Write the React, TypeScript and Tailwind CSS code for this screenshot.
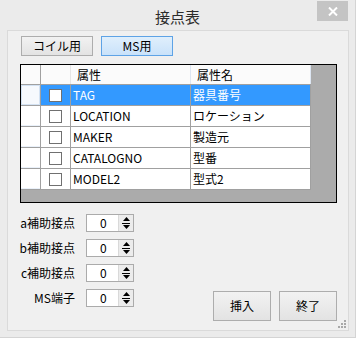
import React from "react";

const font = { fontFamily: '"Noto Sans CJK JP", "Noto Sans", sans-serif' };

function Checkbox() {
  return <div className="w-[13px] h-[13px] border border-[#707070] bg-white" />;
}

function Spinner() {
  return (
    <div className="flex w-[48px] h-[18px] border border-[#ababab] bg-white">
      <div className="flex-1 flex items-center pl-[13px] text-[12px] leading-none text-black">0</div>
      <div className="w-[15px] flex flex-col border-l border-[#d9d9d9] bg-[#ececec]">
        <div className="flex-1 flex items-center justify-center">
          <svg width="7" height="4" viewBox="0 0 7 4"><polygon points="3.5,0 7,4 0,4" fill="#000" /></svg>
        </div>
        <div className="h-px bg-[#000] mx-[3px]" />
        <div className="flex-1 flex items-center justify-center">
          <svg width="7" height="4" viewBox="0 0 7 4"><polygon points="0,0 7,0 3.5,4" fill="#000" /></svg>
        </div>
      </div>
    </div>
  );
}

const rows = [
  ["TAG", "器具番号"],
  ["LOCATION", "ロケーション"],
  ["MAKER", "製造元"],
  ["CATALOGNO", "型番"],
  ["MODEL2", "型式2"],
];

const spinLabels = ["a補助接点", "b補助接点", "c補助接点", "MS端子"];

export default function App() {
  return (
    <div
      className="relative w-[356px] h-[338px] bg-[#ebebeb] border-r border-b border-[#d4d4d4] overflow-hidden"
      style={font}
    >
      {/* Title bar */}
      <div className="h-[30px] flex items-center justify-center pt-[4px] text-[15px] text-[#2b2b2b]">
        接点表
      </div>
      <div className="absolute top-[1px] right-[7px] w-[31px] h-[20px] bg-[#c4c4c4] flex items-center justify-center">
        <svg width="10" height="9" viewBox="0 0 10 9">
          <path d="M1 0.5 L9 8.5 M9 0.5 L1 8.5" stroke="#fff" strokeWidth="2" />
        </svg>
      </div>

      {/* Panel */}
      <div className="ml-[7px] w-[342px] h-[301px] border border-[#dadada] bg-[#f0f0f0] flex flex-col">
        {/* Tab buttons */}
        <div className="flex gap-[8px] mt-[5px] ml-[13px]">
          <div className="w-[72px] h-[20px] border border-[#adadad] bg-gradient-to-b from-[#f2f2f2] to-[#e3e3e3] flex items-center justify-center text-[12px] leading-none text-black">
            コイル用
          </div>
          <div className="w-[72px] h-[20px] border border-[#5ea3e6] bg-gradient-to-b from-[#e0effc] to-[#c9e2fa] flex items-center justify-center text-[12px] leading-none text-black">
            MS用
          </div>
        </div>

        {/* Grid */}
        <div className="mt-[8px] ml-[12px] w-[317px] h-[139px] border border-black bg-[#ababab]">
          <div className="w-[290px] bg-white">
            {/* header */}
            <div className="flex h-[20px] border-b border-[#a0a0a0] bg-[#fbfbfb]">
              <div className="w-[20px] border-r border-[#a0a0a0]" />
              <div className="w-[30px] border-r border-[#e6e6e6]" />
              <div className="w-[120px] border-r border-[#dde6f2] pl-[6px] flex items-center text-[12px] leading-none text-black">
                属性
              </div>
              <div className="w-[120px] border-r border-[#dde6f2] pl-[6px] flex items-center text-[12px] leading-none text-black">
                属性名
              </div>
            </div>
            {rows.map(([a, b], i) => {
              const sel = i === 0;
              return (
                <div key={a} className="flex h-[21px] border-b border-[#a0a0a0]">
                  <div className="w-[20px] border-r border-[#a0a0a0] bg-white">
                    <div
                      className={
                        sel
                          ? "w-full h-full border border-[#d3e2f3] bg-[#f6f9fd]"
                          : "w-full h-full border-b border-[#eaf1fa] bg-white"
                      }
                    />
                  </div>
                  <div
                    className={
                      "w-[30px] border-r border-[#a0a0a0] flex items-center justify-center " +
                      (sel ? "bg-[#3399ff]" : "bg-white")
                    }
                  >
                    <Checkbox />
                  </div>
                  <div
                    className={
                      "w-[120px] border-r border-[#a0a0a0] pl-[2px] flex items-center text-[12px] leading-none " +
                      (sel ? "bg-[#3399ff] text-white" : "bg-white text-black")
                    }
                  >
                    {a}
                  </div>
                  <div
                    className={
                      "w-[120px] border-r border-[#a0a0a0] pl-[2px] flex items-center text-[12px] leading-none " +
                      (sel ? "bg-[#3399ff] text-white" : "bg-white text-black")
                    }
                  >
                    {b}
                  </div>
                </div>
              );
            })}
          </div>
        </div>

        {/* Bottom area */}
        <div className="flex-1 flex">
          <div className="flex flex-col gap-[7px] mt-[11px] ml-0">
            {spinLabels.map((l) => (
              <div key={l} className="flex items-center h-[18px]">
                <div className="w-[68px] text-right text-[12px] leading-none text-black pr-[1px]">{l}</div>
                <div className="ml-[10px]">
                  <Spinner />
                </div>
              </div>
            ))}
          </div>
          <div className="flex-1 flex items-end justify-end pb-[9px] pr-[11px] gap-[8px]">
            <div className="w-[58px] h-[30px] border border-[#adadad] bg-gradient-to-b from-[#f2f2f2] to-[#e3e3e3] flex items-center justify-center text-[12px] leading-none text-black">
              挿入
            </div>
            <div className="w-[58px] h-[30px] border border-[#adadad] bg-gradient-to-b from-[#f2f2f2] to-[#e3e3e3] flex items-center justify-center text-[12px] leading-none text-black">
              終了
            </div>
          </div>
        </div>
      </div>

      {/* Resize grip */}
      <div className="absolute left-[338px] top-[320px]">
        <svg width="9" height="8" viewBox="0 0 9 8">
          <rect x="6" y="0" width="2" height="2" fill="#a8a8a8" />
          <rect x="3" y="3" width="2" height="2" fill="#a8a8a8" />
          <rect x="6" y="3" width="2" height="2" fill="#a8a8a8" />
          <rect x="0" y="6" width="2" height="2" fill="#a8a8a8" />
          <rect x="3" y="6" width="2" height="2" fill="#a8a8a8" />
          <rect x="6" y="6" width="2" height="2" fill="#a8a8a8" />
        </svg>
      </div>
    </div>
  );
}
